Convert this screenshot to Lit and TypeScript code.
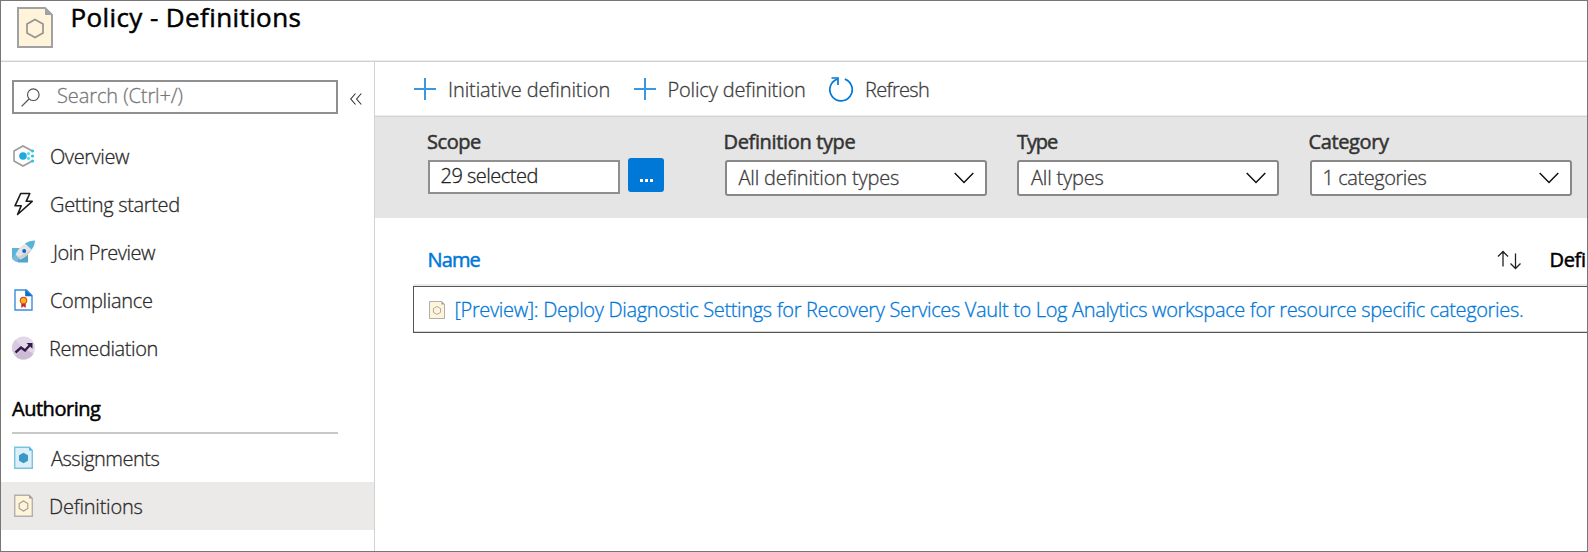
import { LitElement, html, css, svg } from "lit";
import { customElement, property } from "lit/decorators.js";
import { classMap } from "lit/directives/class-map.js";

/** A single line of text whose letters are tracked to fill a given ink width. */
@customElement("fit-text")
class FitText extends LitElement {
  @property() text = "";
  @property({ type: Number }) ink = 0;
  static styles = css`
    :host { display: block; white-space: nowrap; flex: none; font-variant-ligatures: none; }
    .line { display: block; }
  `;
  render() {
    return html`<span class="line">${this.text}</span>`;
  }
  async updated() {
    await document.fonts.ready;
    const line = this.renderRoot.querySelector<HTMLElement>(".line")!;
    const cs = getComputedStyle(this);
    const ctx = document.createElement("canvas").getContext("2d")! as any;
    ctx.font = `${cs.fontWeight} ${cs.fontSize} ${cs.fontFamily}`;
    ctx.letterSpacing = "0.001px";
    const m = ctx.measureText(this.text);
    const natural = m.actualBoundingBoxRight + m.actualBoundingBoxLeft;
    line.style.letterSpacing = `${(this.ink - natural) / (this.text.length - 1)}px`;
    line.style.marginLeft = `${m.actualBoundingBoxLeft}px`;
    this.style.width = `${this.ink}px`;
  }
}

const fit = (text: string, ink: number) => html`<fit-text .text=${text} .ink=${ink}></fit-text>`;

const definitionIcon = (w: number, h: number) => svg`
  <svg width=${w} height=${h} viewBox="0 0 36 41" preserveAspectRatio="none">
    <path d="M1 1H28L35 8V40H1Z" fill="#fff4d9" stroke="#a0a1a2" stroke-width="2"/>
    <path d="M28 0V8H36Z" fill="#a0a1a2"/>
    <path d="M18 12.5L26 17V26L18 30.5L10 26V17Z" fill="none" stroke="#949494" stroke-width="1.7"/>
  </svg>`;

const icons: Record<string, unknown> = {
  overview: svg`<svg width="24" height="24" viewBox="0 0 24 24">
    <path d="M19.5 6.500L11 2L2 7V17L11 22L19.500 17.500" fill="none" stroke="#9b9b9b" stroke-width="1.600"/>
    <circle cx="11" cy="12" r="3.800" fill="#1fa9dc"/>
    <g fill="#50e0f7"><circle cx="16.500" cy="9.600" r="1.600"/><circle cx="16.500" cy="14.400" r="1.600"/></g>
    <g fill="#2fbfe3"><circle cx="20.500" cy="7" r="1.600"/><circle cx="20.500" cy="12" r="1.600"/><circle cx="20.500" cy="17" r="1.600"/></g></svg>`,
  bolt: svg`<svg width="24" height="24" viewBox="0 0 24 24">
    <path d="M8.700 1.500H17.800L14.200 9.300H20.200L5.600 22.500L9.200 13.800H3Z" fill="none" stroke="#1b1a19" stroke-width="1.600" stroke-linejoin="round"/></svg>`,
  rocket: svg`<svg width="24" height="24" viewBox="0 0 24 24">
    <path d="M0 8H8L3 18H0Z" fill="#59b4d9"/><path d="M1 17L5 14L9 17L7 22H4L0 19Z" fill="#7ab9d8"/>
    <path d="M16 12V22.500H6V20L12 14Z" fill="#4fa5cc"/>
    <path d="M13 3.500C9 6 6 9.500 3.500 14.500L8.500 19.500C13.500 17 17 14 19.600 9.700Z" fill="#e5e5e8"/>
    <path d="M6 17L19.600 9.700C17 14 13.500 17 8.500 19.500Z" fill="#cfd0d4"/>
    <path d="M23 0.500C19 0.700 16 1.500 13 3.500L19.600 9.700C21.800 7 22.800 4 23 0.500Z" fill="#59b4d9"/>
    <circle cx="12.200" cy="11" r="2" fill="#1565c0"/></svg>`,
  compliance: svg`<svg width="24" height="24" viewBox="0 0 24 24">
    <path d="M3 2H14.500L20 7.500V22H3Z" fill="#fff" stroke="#3a8fde" stroke-width="1.400"/>
    <path d="M13.200 1.500V8.200H20.500Z" fill="#0f6fc5"/>
    <path d="M9.300 14H13.700V20L11.500 18.200L9.300 20Z" fill="#c4232b"/>
    <circle cx="11.500" cy="12.600" r="3.200" fill="#fbb91f" stroke="#e0521d" stroke-width="1.200"/></svg>`,
  remediation: svg`<svg width="24" height="24" viewBox="0 0 24 24">
    <circle cx="11.500" cy="12" r="11.500" fill="#e3d8e8"/>
    <path d="M3.400 20.100A11.500 11.500 0 0 0 21.500 17.800L11.500 12Z" fill="#cdbbd6"/>
    <path d="M3.400 3.900A11.500 11.500 0 0 0 3.400 20.100L11.500 12Z" fill="#d8c9df"/>
    <path d="M3.500 16.500L9 11.500L13 14.500L18 9" fill="none" stroke="#341a4a" stroke-width="2.400"/>
    <path d="M14.500 7H20.500V12.800Z" fill="#341a4a"/></svg>`,
  assignments: svg`<svg width="24" height="24" viewBox="0 0 24 24">
    <path d="M2.700 1.200H17L20.300 4.500V22.300H2.700Z" fill="#ddeff8" stroke="#7cc3e2" stroke-width="1.400"/>
    <path d="M17 .5V4.500H21Z" fill="#59b4d9"/>
    <path d="M11.500 6.800L16 9.300V14.700L11.500 17.200L7 14.700V9.300Z" fill="#3999c6"/></svg>`,
  definitions: svg`<svg width="24" height="24" viewBox="0 0 24 24">
    <path d="M2.700 1.200H17L20.300 4.500V22.300H2.700Z" fill="#fff4d9" stroke="#b0b0b0" stroke-width="1.400"/>
    <path d="M17 .5V4.500H21Z" fill="#a0a1a2"/>
    <path d="M11.500 7L15.800 9.500V14.500L11.500 17L7.200 14.500V9.500Z" fill="none" stroke="#a09c90" stroke-width="1.100"/></svg>`,
};

const plus = svg`<svg width="22" height="22" viewBox="0 0 22 22"><path d="M11 0V22M0 11H22" stroke="#3b97e0" stroke-width="2"/></svg>`;
const chevron = svg`<svg class="chev" width="20" height="12" viewBox="0 0 20 12"><path d="M.7 1L10 10.500L19.300 1" fill="none" stroke="#111" stroke-width="1.500"/></svg>`;

const mainNav: [string, string, number][] = [
  ["overview", "Overview", 79],
  ["bolt", "Getting started", 128.3],
  ["rocket", "Join Preview", 105],
  ["compliance", "Compliance", 101],
  ["remediation", "Remediation", 106.5],
];
const authoringNav: [string, string, number][] = [
  ["assignments", "Assignments", 108.5],
  ["definitions", "Definitions", 91.5],
];
const pickers: [string, number, string, number][] = [
  ["Definition type", 131, "All definition types", 160.5],
  ["Type", 41, "All types", 72.5],
  ["Category", 80.5, "1 categories", 103],
];

@customElement("app-root")
class AppRoot extends LitElement {
  static styles = css`
    * { box-sizing: border-box; }
    :host {
      display: flex; flex-direction: column; box-sizing: border-box; width: 1588px; height: 552px; overflow: hidden;
      border: 1px solid #767676; background: #fff; color: #2b2a29;
      font: 300 20px/28px "Open Sans", "Noto Sans", sans-serif;
      -webkit-text-stroke-width: 0.300px;
    }
    svg { display: block; flex: none; }
    header { display: flex; height: 61px; flex: none; padding: 6px 0 0 16px; gap: 19.500px; border-bottom: 1px solid #d0d0d0; box-shadow: inset 0 -1px #ececec; }
    .title { font-size: 26px; line-height: 36px; font-weight: 400; color: #000; margin-top: -8px; -webkit-text-stroke-width: 0.500px; }
    .body { display: flex; flex: 1; min-height: 0; }
    aside { width: 374px; flex: none; border-right: 1px solid #d2d2d2; padding-top: 18px; }
    .searchrow { display: flex; align-items: center; gap: 12px; padding-left: 11px; margin-bottom: 18px; }
    .search { display: flex; width: 326px; height: 34px; border: 2px solid #8f8f8f; padding: 0 0 0 7px; gap: 18px; color: #777; }
    .search svg { margin-top: 6px; }
    .collapse { margin-top: 3px; }
    .item { display: flex; height: 48px; align-items: center; padding-left: 11px; gap: 15px; }
    .item fit-text { margin-top: 2px; }
    .item.active { background: #ebeae9; }
    .group { margin: 21px 36px 0 11px; padding-top: 2px; height: 41px; border-bottom: 2px solid #c8c8c8; font-weight: 400; color: #000; -webkit-text-stroke-width: 0.500px; }
    main { flex: 1; min-width: 0; overflow: hidden; }
    .toolbar { display: flex; height: 55px; align-items: center; padding-left: 39px; border-bottom: 1px solid #d2d2d2; box-shadow: inset 0 -1px #ececec; color: #3b3b3b; }
    .cmd { display: flex; align-items: center; gap: 14px; margin-right: 24px; }
    .cmd fit-text { margin-top: 2px; }
    .filters { display: flex; height: 101px; background: #e5e5e5; padding: 11px 0 0 53px; gap: 30.500px; color: #333; }
    .label { font-weight: 400; height: 32px; -webkit-text-stroke-width: 0.500px; }
    .scope { width: 266px; }
    .scoperow { display: flex; gap: 8px; }
    .box { width: 192px; height: 34px; border: 2px solid #8f8f8f; background: #fff; padding: 0 0 0 11.500px; color: #222; }
    .more { width: 36px; height: 34px; margin-top: -2px; background: #0078d7; border-radius: 3px; border: 0; padding: 21px 0 0 12px; display: flex; gap: 2px; }
    .dot { width: 3px; height: 3px; background: #fff; }
    .picker { width: 262px; }
    .select { display: flex; justify-content: space-between; align-items: center; height: 36px; border: 2px solid #8a8886; border-radius: 3px; background: #fff; padding: 0 11px 0 12px; }
    .select fit-text { color: #3b3b3b; }
    .grid { padding-left: 38px; }
    .head { display: flex; align-items: center; height: 68px; padding: 17px 0 0 15.500px; border-bottom: 2px solid #eceae8; color: #000; font-weight: 400; -webkit-text-stroke-width: 0.500px; }
    .name { flex: none; width: 1068px; color: #0078d7; }
    .head svg { margin-right: 29px; }
    .row { display: flex; align-items: center; height: 47px; border: 1px solid #555; border-right: 0; padding-left: 15px; gap: 10.500px; color: #0078d7; box-shadow: inset 0 -1px #d6d6d6; }
  `;

  private item([icon, text, ink]: [string, string, number]) {
    return html`<div class=${classMap({ item: true, active: text === "Definitions" })}>${icons[icon]}${fit(text, ink)}</div>`;
  }

  render() {
    return html`
      <header>${definitionIcon(36, 41)}<div class="title">${fit("Policy - Definitions", 228)}</div></header>
      <div class="body">
        <aside>
          <div class="searchrow">
            <div class="search">
              <svg width="19" height="19" viewBox="0 0 19 19"><circle cx="12.300" cy="6.700" r="5.800" fill="none" stroke="#555" stroke-width="1.200"/><path d="M8 11L.6 18.400" stroke="#555" stroke-width="1.300"/></svg>
              ${fit("Search (Ctrl+/)", 124.6)}
            </div>
            <svg class="collapse" width="12" height="12" viewBox="0 0 12 12"><path d="M5.500 .5L.8 6L5.500 11.500M11.300 .5L6.600 6L11.300 11.500" fill="none" stroke="#333" stroke-width="1.100"/></svg>
          </div>
          ${mainNav.map((n) => this.item(n))}
          <div class="group">${fit("Authoring", 89)}</div>
          ${authoringNav.map((n) => this.item(n))}
        </aside>
        <main>
          <div class="toolbar">
            <div class="cmd">${plus}${fit("Initiative definition", 159.5)}</div>
            <div class="cmd">${plus}${fit("Policy definition", 135.5)}</div>
            <div class="cmd">
              <svg width="24" height="25" viewBox="0 0 24 25"><path d="M15.800 2.100A11.200 11.200 0 1 1 8 2.200" fill="none" stroke="#0078d7" stroke-width="1.700"/><path d="M2.500 1H9V8" fill="none" stroke="#0078d7" stroke-width="1.700"/></svg>
              ${fit("Refresh", 62)}
            </div>
          </div>
          <div class="filters">
            <div class="scope">
              <div class="label">${fit("Scope", 53)}</div>
              <div class="scoperow">
                <div class="box">${fit("29 selected", 96)}</div>
                <div class="more"><span class="dot"></span><span class="dot"></span><span class="dot"></span></div>
              </div>
            </div>
            ${pickers.map(([label, lw, value, vw]) => html`<div class="picker">
              <div class="label">${fit(label, lw)}</div>
              <div class="select">${fit(value, vw)}${chevron}</div>
            </div>`)}
          </div>
          <div class="grid">
            <div class="head">
              <div class="name">${fit("Name", 52)}</div>
              <svg width="25" height="20" viewBox="0 0 25 20"><path d="M6 16.500V1.500M1 6.500L6 1.500L11 6.500M18.500 3.500V18.500M13.500 13.500L18.500 18.500L23.500 13.500" fill="none" stroke="#222" stroke-width="1.300"/></svg>
              ${fit("Defi", 34.5)}
            </div>
            <div class="row">${definitionIcon(16, 18)}${fit("[Preview]: Deploy Diagnostic Settings for Recovery Services Vault to Log Analytics workspace for resource specific categories.", 1067.5)}</div>
          </div>
        </main>
      </div>`;
  }
}
